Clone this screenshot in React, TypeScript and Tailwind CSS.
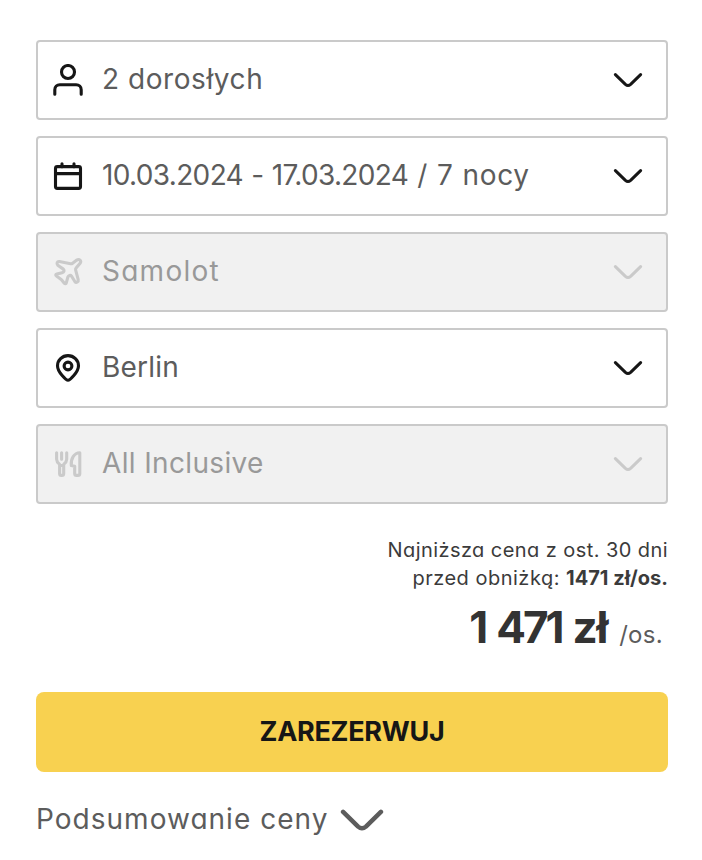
import type { ReactNode } from "react";

interface IconProps {
  className?: string;
}

interface FieldProps {
  icon: ReactNode;
  label: ReactNode;
  disabled?: boolean;
  labelClass?: string;
}

function Svg({ children }: { children: ReactNode }) {
  return (
    <svg
      viewBox="0 0 32 32"
      className="w-8 h-8 shrink-0"
      fill="none"
      stroke="currentColor"
      strokeWidth="3.1"
      strokeLinecap="round"
      strokeLinejoin="round"
    >
      {children}
    </svg>
  );
}

const PersonIcon = () => (
  <Svg>
    <circle cx="16" cy="8" r="6.5" />
    <path d="M2.8 30.3v-4.6a5 5 0 0 1 5-5h16.4a5 5 0 0 1 5 5v4.6" />
  </Svg>
);

const CalendarIcon = () => (
  <Svg>
    <rect x="3.5" y="6.6" width="25" height="21.8" rx="1.8" />
    <path d="M3.5 13.6h25M10 3.7v3M22 3.7v3" />
  </Svg>
);

const PlaneIcon = () => (
  <Svg>
    <path d="M7.4 5.6l11.2 2.2c.8.1 1.4-.1 2-.6l4.2-3.1c2.5-1.6 5 .8 3.3 3.2l-4 4.8c-.5.6-.6 1.1-.5 1.8l2.6 9.7c.5 2-1.9 3.8-3.2 2.1L19.6 20.2c-1.2-1.5-3.2-.9-3.7.8l-1.6 5.8c-.3 1.2-1.2 1.3-2 .4L9.5 23.7l-5-3.6c-1.2-.9-.9-1.7.3-2l5.3-1.4c2-.5 2.6-2.2 1.2-3.6L5.8 9.3C4.2 7.5 5.2 5.2 7.4 5.6z" />
  </Svg>
);

const PinIcon = () => (
  <Svg>
    <path d="M16 28.2c-1.5 0-10.5-7.8-10.5-14.5a10.5 10.1 0 0 1 21 0c0 6.7-9 14.5-10.5 14.5z" />
    <circle cx="16" cy="14" r="3.9" />
  </Svg>
);

const CutleryIcon = () => (
  <Svg>
    <path d="M4.6 4.8v6.4c0 2 .8 3.3 3 5.2v9c0 1.4.5 2 1.7 2h.6c1.2 0 1.8-.6 1.8-2v-9c2.2-1.9 3-3.2 3-5.2V4.8M9.6 4.8v6.4M7.6 17.5h4.1M27.8 4.7v20.7c0 1.4-.5 2-1.8 2h-1.5c-1.3 0-1.8-.6-1.8-2v-7.1l-3.4-.7c-.7-6.6 2.8-12.9 8.5-12.9z" />
  </Svg>
);

function Chevron({ className = "" }: IconProps) {
  return (
    <svg
      viewBox="0 0 32 16"
      className={className}
      fill="none"
      stroke="currentColor"
      strokeWidth="3"
      strokeLinecap="round"
      strokeLinejoin="round"
    >
      <path d="M3.4 2.6L13.4 12.4q2.6 2.2 5.2 0L28.6 2.6" />
    </svg>
  );
}

function Field({ icon, label, disabled = false, labelClass = "" }: FieldProps) {
  return (
    <button
      type="button"
      disabled={disabled}
      className={`flex h-20 w-full items-center rounded border-2 border-[#cacaca] pl-3.5 pr-[22px] text-left ${
        disabled ? "bg-[#f1f1f1] text-[#cacaca]" : "bg-white text-[#161616]"
      }`}
    >
      {icon}
      <span
        className={`ml-[18px] flex-1 whitespace-nowrap pb-0.5 text-[28px] leading-8 ${labelClass} ${
          disabled ? "text-[#999999]" : "text-[#5c5c5c]"
        }`}
      >
        {label}
      </span>
      <Chevron className="h-4 w-8 shrink-0" />
    </button>
  );
}

export default function App() {
  return (
    <main className="min-h-[860px] w-[702px] bg-white px-9 pt-10 font-['Inter','Noto_Sans',sans-serif] [font-feature-settings:'cv11']">
      <div className="flex w-[632px] flex-col gap-4">
        <Field icon={<PersonIcon />} label="2 dorosłych" labelClass="tracking-[0.55px]" />
        <Field
          icon={<CalendarIcon />}
          label={
            <>
              10.03.2024 - 17.03.2024
              <span className="tracking-[0.7px] [word-spacing:0.4px]"> / 7 nocy</span>
            </>
          }
          labelClass="tracking-[-0.65px] [word-spacing:1px]"
        />
        <Field icon={<PlaneIcon />} label="Samolot" labelClass="tracking-[1.25px]" disabled />
        <Field icon={<PinIcon />} label="Berlin" labelClass="tracking-[0.2px]" />
        <Field icon={<CutleryIcon />} label="All Inclusive" labelClass="tracking-[0.35px]" disabled />
      </div>

      {/* Price */}
      <div className="flex h-[188px] w-[632px] flex-col items-end whitespace-nowrap pt-8 text-[#3b3b3b]">
        <p className="text-xl leading-7 tracking-[0.43px]">Najniższa cena z ost. 30 dni</p>
        <p className="text-xl leading-7 tracking-[0.5px]">
          przed obniżką: <strong className="font-bold tracking-normal">1471 zł/os.</strong>
        </p>
        <div className="flex items-baseline gap-3 pr-[5px] pt-[5px]">
          <strong className="text-[44px] leading-[60px] font-bold tracking-[-3px] text-[#333333] [word-spacing:3.5px]">
            1 471 <span className="tracking-[-1.2px]">zł</span>
          </strong>
          <span className="text-2xl tracking-[0.3px] text-[#5c5c5c]">/os.</span>
        </div>
      </div>

      <button
        type="button"
        className="flex h-20 w-[632px] items-center justify-center rounded-lg bg-[#f8d150] text-[27px] font-bold tracking-[-0.3px] text-[#161616]"
      >
        ZAREZERWUJ
      </button>

      <button type="button" className="mt-7 flex h-10 items-center whitespace-nowrap text-[28px] text-[#5c5c5c]">
        <span className="pb-0.5 tracking-[1.02px]">Podsumowanie ceny</span>
        <Chevron className="ml-2.5 h-6 w-12" />
      </button>
    </main>
  );
}
